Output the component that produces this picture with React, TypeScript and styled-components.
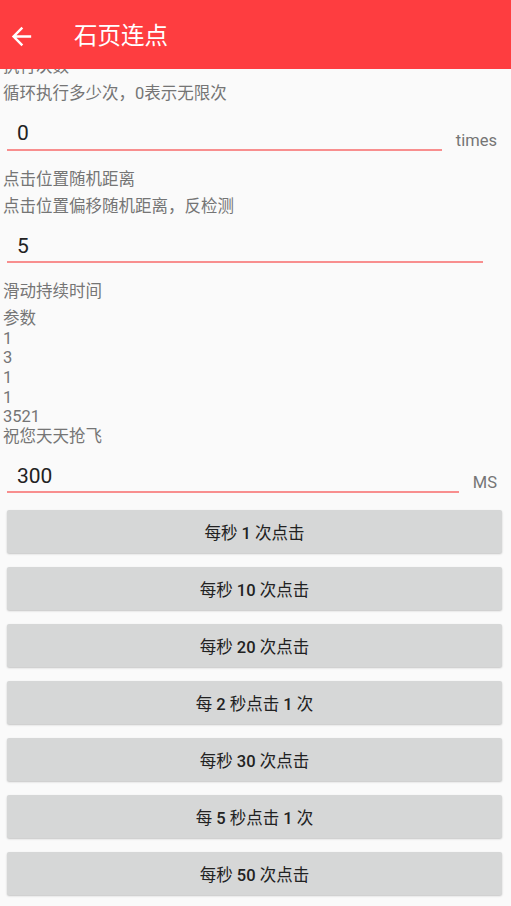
import React from 'react';
import styled, { createGlobalStyle } from 'styled-components';

const GlobalStyle = createGlobalStyle`
  html, body {
    margin: 0;
    padding: 0;
    background: #fafafa;
  }
  body {
    font-family: Roboto, "Noto Sans CJK SC", "Noto Sans", sans-serif;
  }
`;

const Page = styled.div`
  width: 511px;
  min-height: 906px;
  background: #fafafa;
`;

// the toolbar stays on top while the settings scroll under it
const AppBar = styled.header`
  position: fixed;
  top: 0;
  left: 0;
  right: 0;
  height: 69px;
  box-sizing: border-box;
  padding-top: 3px;
  z-index: 10;
  display: flex;
  align-items: center;
  background: #fe3d40;
  color: #fff;
`;

const BackButton = styled.button`
  display: flex;
  align-items: center;
  justify-content: center;
  width: 29px;
  height: 29px;
  margin-left: 7px;
  padding: 0;
  border: none;
  background: transparent;
  color: #fff;
`;

const Title = styled.h1`
  margin: 0 0 0 38px;
  font-size: 23.5px;
  font-weight: 400;
  line-height: 30px;
  color: #fff;
`;

const Content = styled.main`
  padding-top: 57px;
  display: flex;
  flex-direction: column;
`;

const Setting = styled.section`
  display: flex;
  flex-direction: column;
  padding-left: 3px;
  margin-bottom: 19px;
`;

const Label = styled.div`
  font-size: 16.5px;
  line-height: 20px;
  color: #757575;
`;

const Hint = styled.div`
  margin-top: 7px;
  font-size: 16.5px;
  line-height: 19.6px;
  color: #757575;
  white-space: pre-line;
`;

const FieldRow = styled.div`
  display: flex;
  align-items: flex-end;
  margin-top: 16px;
  padding: 0 14px 0 4px;
`;

const Input = styled.input<{ $inset?: boolean }>`
  flex: 1;
  min-width: 0;
  margin-right: ${p => (p.$inset ? '14px' : '0')};
  padding: 0 0 2px 10px;
  border: none;
  border-bottom: 2px solid #f88e8e;
  background: transparent;
  outline: none;
  font-family: Roboto, "Noto Sans CJK SC", sans-serif;
  font-size: 21px;
  line-height: 24px;
  height: 27px;
  box-sizing: content-box;
  color: #222;
`;

const Unit = styled.span`
  margin: 0 0 0 14px;
  font-size: 16.5px;
  line-height: 20px;
  color: #757575;
`;

const Buttons = styled.div`
  display: flex;
  flex-direction: column;
  gap: 14px;
  padding: 0 9px 20px 7px;
  margin-top: -2px;
`;

const RateButton = styled.button`
  height: 43px;
  padding: 0;
  border: none;
  border-radius: 2px;
  background: #d6d7d7;
  box-shadow: 0 1px 2px rgba(0, 0, 0, 0.22);
  font-family: Roboto, "Noto Sans CJK SC", sans-serif;
  font-size: 16.5px;
  font-weight: 400;
  color: #222;
`;

const Num = styled.b`
  font-weight: 500;
`;

const ArrowBack = () => (
  <svg width="29" height="29" viewBox="0 0 24 24" fill="currentColor">
    <path d="M20 11H7.83l5.59-5.59L12 4l-8 8 8 8 1.41-1.41L7.83 13H20v-2z" />
  </svg>
);

const rates = [
  '每秒 1 次点击',
  '每秒 10 次点击',
  '每秒 20 次点击',
  '每 2 秒点击 1 次',
  '每秒 30 次点击',
  '每 5 秒点击 1 次',
  '每秒 50 次点击',
];

// digits in the labels are set a bit heavier than the Chinese text
const withNumbers = (text: string) =>
  text.split(/(\d+)/).map((part, i) =>
    /^\d+$/.test(part) ? <Num key={i}>{part}</Num> : part
  );

const App = () => {
  return (
    <Page>
      <GlobalStyle />
      <AppBar>
        <BackButton aria-label="back">
          <ArrowBack />
        </BackButton>
        <Title>石页连点</Title>
      </AppBar>
      <Content>
        <Setting>
          <Label>执行次数</Label>
          <Hint>循环执行多少次，0表示无限次</Hint>
          <FieldRow>
            <Input defaultValue="0" />
            <Unit>times</Unit>
          </FieldRow>
        </Setting>
        <Setting>
          <Label>点击位置随机距离</Label>
          <Hint>点击位置偏移随机距离，反检测</Hint>
          <FieldRow>
            <Input defaultValue="5" $inset />
          </FieldRow>
        </Setting>
        <Setting>
          <Label>滑动持续时间</Label>
          <Hint>{'参数\n1\n3\n1\n1\n3521\n祝您天天抢飞'}</Hint>
          <FieldRow>
            <Input defaultValue="300" />
            <Unit>MS</Unit>
          </FieldRow>
        </Setting>
        <Buttons>
          {rates.map(r => (
            <RateButton key={r}>{withNumbers(r)}</RateButton>
          ))}
        </Buttons>
      </Content>
    </Page>
  );
};

export default App;
